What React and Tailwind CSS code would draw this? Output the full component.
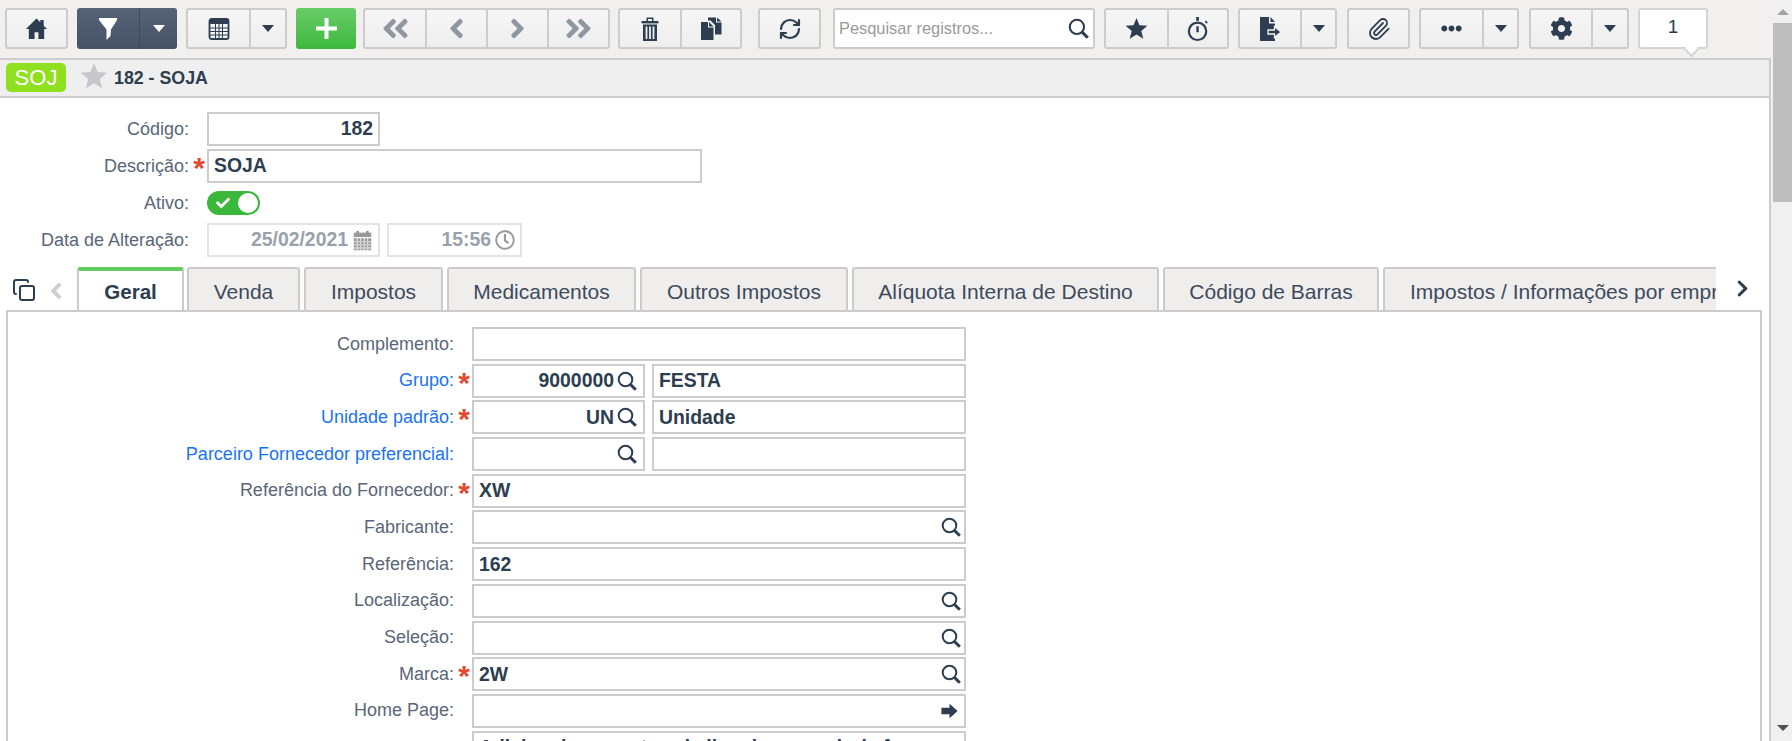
import React from "react";
import { FaAngleDoubleLeft, FaAngleLeft, FaAngleRight, FaAngleDoubleRight, FaEllipsisH, FaCog, FaRegClock, FaCheck, FaChevronRight } from "react-icons/fa";
import { Copy, Paperclip, RefreshCw } from "lucide-react";

const Search = ({ size = 20, className = "" }) => (
  <svg width={size} height={size} viewBox="0 0 20 20" className={className} fill="none" stroke="currentColor">
    <circle cx="8.5" cy="8.5" r="6.8" strokeWidth="2" />
    <path d="M13.5 13.5 L18.8 18.8" strokeWidth="3" />
  </svg>
);

const Star = ({ size, className = "" }) => (
  <svg width={size} height={size} viewBox="0 0 24 24" className={className} fill="currentColor">
    <polygon points="12,1 15.1,8.6 23.4,9.2 17,14.5 19.1,22.8 12,18.2 4.9,22.8 7,14.5 0.6,9.2 8.9,8.6" />
  </svg>
);

const Home = () => (
  <svg width="23" height="23" viewBox="0 0 24 24" fill="currentColor">
    <path d="M12 1.5 L1 12.5 H4 V23 H10 V16 H14 V23 H20 V12.5 H23 L19.5 9 V3 H16 V5.5 Z" />
  </svg>
);

const Funnel = () => (
  <svg width="22" height="24" viewBox="0 0 22 24" fill="currentColor">
    <path d="M2 1 H20 V3 L14 12.5 L13.5 19 L9.5 23 V12.5 L2 3 Z" />
  </svg>
);

const TableIcon = () => (
  <svg width="24" height="24" viewBox="0 0 24 24" fill="none" stroke="#2c3e50">
    <rect x="2.5" y="2" width="19" height="20" rx="2" strokeWidth="1.8" fill="#f4f4f4" />
    <rect x="2.5" y="2" width="19" height="5" rx="1.5" fill="#2c3e50" strokeWidth="0" />
    <path d="M2.5 11 H21.5 M2.5 14.5 H21.5 M2.5 18 H21.5 M8.5 7 V22 M12 7 V22 M15.5 7 V22" strokeWidth="1" />
  </svg>
);

const Plus = () => (
  <svg width="23" height="23" viewBox="0 0 23 23" fill="currentColor">
    <path d="M9.5 1 H13.5 V9.5 H22 V13.5 H13.5 V22 H9.5 V13.5 H1 V9.5 H9.5 Z" />
  </svg>
);

const Trash = () => (
  <svg width="24" height="26" viewBox="0 0 24 26" fill="#2c3e50">
    <path d="M8.5 5 V1.5 H15.5 V5 H14 V3 H10 V5 Z" />
    <rect x="3.5" y="5" width="17" height="2.4" />
    <path fillRule="evenodd" d="M5 8.5 H19 V25 H5 Z M7.6 10.5 V23 H9.4 V10.5 Z M11.1 10.5 V23 H12.9 V10.5 Z M14.6 10.5 V23 H16.4 V10.5 Z" />
  </svg>
);

const Docs = () => (
  <svg width="23" height="24" viewBox="0 0 23 24" fill="#2c3e50">
    <path d="M8 0.5 H16 V5.5 H21.5 V17.5 H15 V8 L10.5 3.5 H8 Z" />
    <path d="M17 0.5 L21.5 4.5 H17 Z" />
    <path d="M1 5 H8 V10.5 H13.5 V23 H1 Z" />
    <path d="M9 5 L13.5 9.5 H9 Z" />
  </svg>
);

const Stopwatch = () => (
  <svg width="22" height="26" viewBox="0 0 24 28" fill="none" stroke="#2c3e50">
    <circle cx="11.5" cy="16.5" r="9.5" strokeWidth="2.4" />
    <path d="M11.5 1 V5" strokeWidth="3" />
    <path d="M11.5 11 V17.5" strokeWidth="2.6" />
    <path d="M20 5.5 L22 7.5" strokeWidth="2" />
  </svg>
);

const Export = () => (
  <svg width="24" height="26" viewBox="0 0 24 26" fill="#2c3e50">
    <path d="M2 1 H11 V7.5 H17 V25 H2 Z" />
    <path d="M12.5 1 L17 6 H12.5 Z" />
    <path d="M10 14 H16.5 V10.5 L23 16 L16.5 21.5 V18 H10 Z" stroke="#f3f3f3" strokeWidth="1.3" />
  </svg>
);

const Calendar = () => (
  <svg width="21" height="21" viewBox="0 0 24 24" className="ml-[4px] shrink-0" fill="#999999">
    <rect x="5" y="1" width="3" height="4" />
    <rect x="16" y="1" width="3" height="4" />
    <rect x="2" y="3" width="20" height="5" />
    <path fillRule="evenodd" d="M2 9.5 H22 V23 H2 Z M5.5 9.5 V23 H6.5 V9.5 Z M9.5 9.5 V23 H10.5 V9.5 Z M13.5 9.5 V23 H14.5 V9.5 Z M17.5 9.5 V23 H18.5 V9.5 Z M2 13 V14 H22 V13 Z M2 16.5 V17.5 H22 V16.5 Z M2 20 V21 H22 V20 Z" />
  </svg>
);

const ArrowSolid = () => (
  <svg width="19" height="18" viewBox="0 0 20 20" fill="#2c3e50">
    <path d="M1 6.5 H10 V2 L19 10 L10 18 V13.5 H1 Z" />
  </svg>
);

const Caret = ({ white }) => (
  <span className={`w-0 h-0 border-x-[6px] border-x-transparent border-t-[7px] ${white ? "border-t-white" : "border-t-[#2c3e50]"}`} />
);

const Seg = ({ w, children, divider, dark }) => (
  <div className={`${w} h-full flex items-center justify-center shrink-0 ${divider ? (dark ? "border-l border-l-[#3f4a5c]" : "border-l-2 border-l-[#cccccc]") : ""}`}>
    {children}
  </div>
);

const Group = ({ ml, w, children }) => (
  <div className={`${ml} ${w} h-[41px] flex rounded-[3px] border-2 border-[#cccccc] bg-gradient-to-b from-[#f6f6f6] to-[#eeeeee] text-[#2c3e50] overflow-hidden shrink-0`}>
    {children}
  </div>
);

const Toolbar = () => (
  <div className="h-[58px] pt-[8px] pl-[5px] flex bg-[#f1f0ef]">
    <Group ml="" w="w-[63px]"><Seg w="w-full"><Home /></Seg></Group>
    <div className="ml-[9px] w-[100px] h-[41px] flex rounded-[3px] bg-gradient-to-b from-[#566376] to-[#465265] text-white shrink-0">
      <Seg w="w-[62px]"><Funnel /></Seg>
      <Seg w="w-[38px]" divider dark><Caret white /></Seg>
    </div>
    <Group ml="ml-[9px]" w="w-[101px]">
      <Seg w="w-[61px]"><TableIcon /></Seg>
      <Seg w="flex-1" divider><Caret /></Seg>
    </Group>
    <div className="ml-[9px] w-[60px] h-[41px] flex items-center justify-center rounded-[3px] bg-gradient-to-b from-[#68cd68] to-[#3bb83b] text-white shrink-0">
      <Plus />
    </div>
    <Group ml="ml-[7px]" w="w-[247px]">
      <Seg w="w-[60px]"><FaAngleDoubleLeft size={31} className="text-[#8f97a1]" /></Seg>
      <Seg w="w-[61px]" divider><FaAngleLeft size={31} className="text-[#8f97a1]" /></Seg>
      <Seg w="w-[61px]" divider><FaAngleRight size={31} className="text-[#8f97a1]" /></Seg>
      <Seg w="flex-1" divider><FaAngleDoubleRight size={31} className="text-[#8f97a1]" /></Seg>
    </Group>
    <Group ml="ml-[8px]" w="w-[124px]">
      <Seg w="w-[60px]"><Trash /></Seg>
      <Seg w="flex-1" divider><Docs /></Seg>
    </Group>
    <Group ml="ml-[16px]" w="w-[63px]"><Seg w="w-full"><RefreshCw size={24} strokeWidth={2.2} /></Seg></Group>
    <div className="ml-[12px] w-[262px] h-[41px] flex items-center rounded-[3px] border-2 border-[#cccccc] bg-white pl-[4px] pr-[4px] shrink-0 text-[#2c3e50]">
      <span className="flex-1 text-[16.4px] text-[#9a9a9a]">Pesquisar registros...</span>
      <Search size={21} />
    </div>
    <Group ml="ml-[9px]" w="w-[125px]">
      <Seg w="w-[61px]"><Star size={23} /></Seg>
      <Seg w="flex-1" divider><Stopwatch /></Seg>
    </Group>
    <Group ml="ml-[9px]" w="w-[99px]">
      <Seg w="w-[60px]"><Export /></Seg>
      <Seg w="flex-1" divider><Caret /></Seg>
    </Group>
    <Group ml="ml-[10px]" w="w-[63px]"><Seg w="w-full"><Paperclip size={24} strokeWidth={1.8} /></Seg></Group>
    <Group ml="ml-[9px]" w="w-[100px]">
      <Seg w="w-[61px]"><FaEllipsisH size={21} /></Seg>
      <Seg w="flex-1" divider><Caret /></Seg>
    </Group>
    <Group ml="ml-[10px]" w="w-[100px]">
      <Seg w="w-[60px]"><FaCog size={23} /></Seg>
      <Seg w="flex-1" divider><Caret /></Seg>
    </Group>
    <div className="relative ml-[9px] w-[70px] h-[41px] flex items-center justify-center rounded-[3px] border-2 border-[#d4d4d4] bg-white text-[19px] text-[#2c3e50] shrink-0">
      <span className="-mt-[2px]">1</span>
      <span className="absolute left-[46px] top-[34px] w-[11px] h-[11px] rotate-45 bg-white border-r-2 border-b-2 border-[#d4d4d4]" />
    </div>
  </div>
);

const HeaderBar = () => (
  <div className="h-[40px] flex items-center border-y-2 border-r-2 border-[#cccccc] bg-[#efefef] pl-[6px]">
    <span className="w-[60px] h-[29px] -mt-[1px] flex items-center justify-center rounded-[5px] bg-[#8fe01e] text-white text-[22px]">SOJ</span>
    <Star size={28} className="ml-[14px] -mt-[4px] text-[#c5c7cb]" />
    <span className="ml-[6px] mt-[1px] text-[17.8px] font-bold text-[#2c3e50]">182 - SOJA</span>
  </div>
);

const Req = () => <span className="text-[#e2492f] text-[30px] leading-[26px] h-[26px] block font-bold pt-[6px] ml-[2px]">*</span>;

const Box = ({ w, children, right, muted, light }) => (
  <div className={`${w} h-[34px] flex items-center border-2 ${light ? "border-[#e4e4e4]" : "border-[#cccccc]"} bg-white px-[5px] text-[19.4px] font-bold shrink-0 whitespace-nowrap overflow-hidden ${right ? "justify-end" : ""} ${muted ? "text-[#9aa1ab]" : "text-[#2c3e50]"}`}>
    {children}
  </div>
);

const Row = ({ label, req, blue, labelW, children }) => (
  <div className="flex items-center h-[34px]">
    <span className={`${labelW} text-right text-[18px] shrink-0 whitespace-nowrap ${blue ? "text-[#1a73f5]" : "text-[#5a6677]"}`}>{label ? `${label}:` : ""}</span>
    <span className="w-[18px] h-[34px] flex justify-center shrink-0">{req && <Req />}</span>
    {children}
  </div>
);

const TopForm = () => (
  <div className="h-[169px] pt-[14px] flex flex-col gap-y-[3px]">
    <Row label="Código" labelW="w-[189px]"><Box w="w-[173px]" right>182</Box></Row>
    <Row label="Descrição" req labelW="w-[189px]"><Box w="w-[495px]">SOJA</Box></Row>
    <div className="flex items-center h-[34px]">
      <span className="w-[189px] text-right text-[18px] text-[#5a6677]">Ativo:</span>
      <span className="w-[18px]" />
      <div className="w-[53px] h-[24px] rounded-full bg-[#3bb83b] flex items-center justify-between pl-[9px] pr-[2px]">
        <FaCheck size={14} className="text-white" />
        <span className="w-[20px] h-[20px] rounded-full bg-white" />
      </div>
    </div>
    <Row label="Data de Alteração" labelW="w-[189px]">
      <Box w="w-[173px]" right muted light>25/02/2021<Calendar /></Box>
      <div className="ml-[7px]"><Box w="w-[135px]" right muted light>15:56<FaRegClock size={20} className="ml-[4px] text-[#999999]" /></Box></div>
    </Row>
  </div>
);

const tabs = [
  ["Venda", "w-[113px]"],
  ["Impostos", "w-[139px]"],
  ["Medicamentos", "w-[189px]"],
  ["Outros Impostos", "w-[208px]"],
  ["Alíquota Interna de Destino", "w-[307px]"],
  ["Código de Barras", "w-[216px]"],
];

const Tabs = () => (
  <div className="flex h-[45px] items-start -mb-[2px] relative">
    <div className="w-[77px] h-full shrink-0 flex items-start pt-[11px] pl-[12px] text-[#2c3e50] gap-[7px]">
      <Copy size={24} strokeWidth={2} />
      <FaAngleLeft size={26} className="text-[#cfcfcf]" />
    </div>
    <div className="w-[107px] h-[45px] shrink-0 flex items-center justify-center pt-[2px] border-x-2 border-t-[4px] border-x-[#cfcaca] border-t-[#63cc63] rounded-t-[3px] bg-white z-10 text-[20.6px] font-bold text-[#2c3e50]">Geral</div>
    <div className="flex-1 min-w-0 flex items-start ml-[-1px]">
      {tabs.map(([t, w]) => (
        <div key={t} className={`${w} ml-[4px] h-[45px] shrink-0 flex items-center justify-center pt-[2px] border-x-2 border-t-2 border-[#cfcaca] rounded-t-[3px] bg-[#f0eeed] text-[21px] text-[#3d4a5c] whitespace-nowrap`}>{t}</div>
      ))}
      <div className="w-[400px] ml-[4px] h-[45px] shrink-0 flex items-center pl-[25px] pt-[2px] border-x-2 border-t-2 border-[#cfcaca] rounded-t-[3px] bg-[#f0eeed] text-[21px] text-[#3d4a5c] whitespace-nowrap">Impostos / Informações por empresa</div>
    </div>
  </div>
);

const fields = [
  { label: "Complemento", cell: <Box w="w-[494px]" /> },
  { label: "Grupo", req: 1, blue: 1, two: "9000000", val: "FESTA" },
  { label: "Unidade padrão", req: 1, blue: 1, two: "UN", val: "Unidade" },
  { label: "Parceiro Fornecedor preferencial", blue: 1, two: "", val: "" },
  { label: "Referência do Fornecedor", req: 1, cell: <Box w="w-[494px]">XW</Box> },
  { label: "Fabricante", search: 1 },
  { label: "Referência", cell: <Box w="w-[494px]">162</Box> },
  { label: "Localização", search: 1 },
  { label: "Seleção", search: 1 },
  { label: "Marca", req: 1, search: 1, val: "2W" },
  { label: "Home Page", cell: <Box w="w-[494px]"><span className="flex-1" /><ArrowSolid /></Box> },
];

const Panel = () => (
  <div className="flex-1 min-h-0 overflow-hidden ml-[6px] mr-[7px] border-x-2 border-t-2 border-[#cccccc] bg-white pt-[15px]">
    <div className="flex flex-col gap-y-[2.7px]">
      {fields.map((f) => (
        <Row key={f.label} label={f.label} req={f.req} blue={f.blue} labelW="w-[446px]">
          {f.cell}
          {f.two !== undefined && (
            <>
              <Box w="w-[173px]" right>{f.two}<Search size={20} className="ml-[3px] shrink-0 mr-[1px]" /></Box>
              <div className="ml-[7px]"><Box w="w-[314px]">{f.val}</Box></div>
            </>
          )}
          {f.search && <Box w="w-[494px]"><span className="flex-1">{f.val}</span><Search size={20} className="-mr-[2px]" /></Box>}
        </Row>
      ))}
      <Row label="" labelW="w-[446px]"><Box w="w-[494px]">Adicional para entrar de lixo da mercadoria fora</Box></Row>
    </div>
  </div>
);

const Scrollbar = () => (
  <div className="w-[21px] h-full pl-[2px] flex flex-col bg-[#f0f0f0] shrink-0">
    <div className="h-[23px] flex items-center justify-center">
      <span className="w-0 h-0 border-x-[6px] border-x-transparent border-b-[6px] border-b-[#a3a3a3]" />
    </div>
    <div className="h-[179px] bg-[#bdbdbd]" />
    <div className="flex-1" />
    <div className="h-[26px] flex items-center justify-center">
      <span className="w-0 h-0 border-x-[6px] border-x-transparent border-t-[6px] border-t-[#505050]" />
    </div>
  </div>
);

export default function App() {
  return (
    <div className="w-[1792px] h-[741px] overflow-hidden flex bg-white font-['Liberation_Sans',Arial,sans-serif]">
      <div className="w-[1771px] h-full flex flex-col shrink-0">
        <Toolbar />
        <HeaderBar />
        <div className="flex-1 min-h-0 flex flex-col border-r-2 border-[#cccccc] bg-white">
          <TopForm />
          <div className="relative">
            <div className="mr-[53px] overflow-hidden"><Tabs /></div>
            <FaChevronRight size={19} className="absolute right-[17px] top-[12px] text-[#2c3e50]" />
          </div>
          <Panel />
        </div>
      </div>
      <Scrollbar />
    </div>
  );
}
